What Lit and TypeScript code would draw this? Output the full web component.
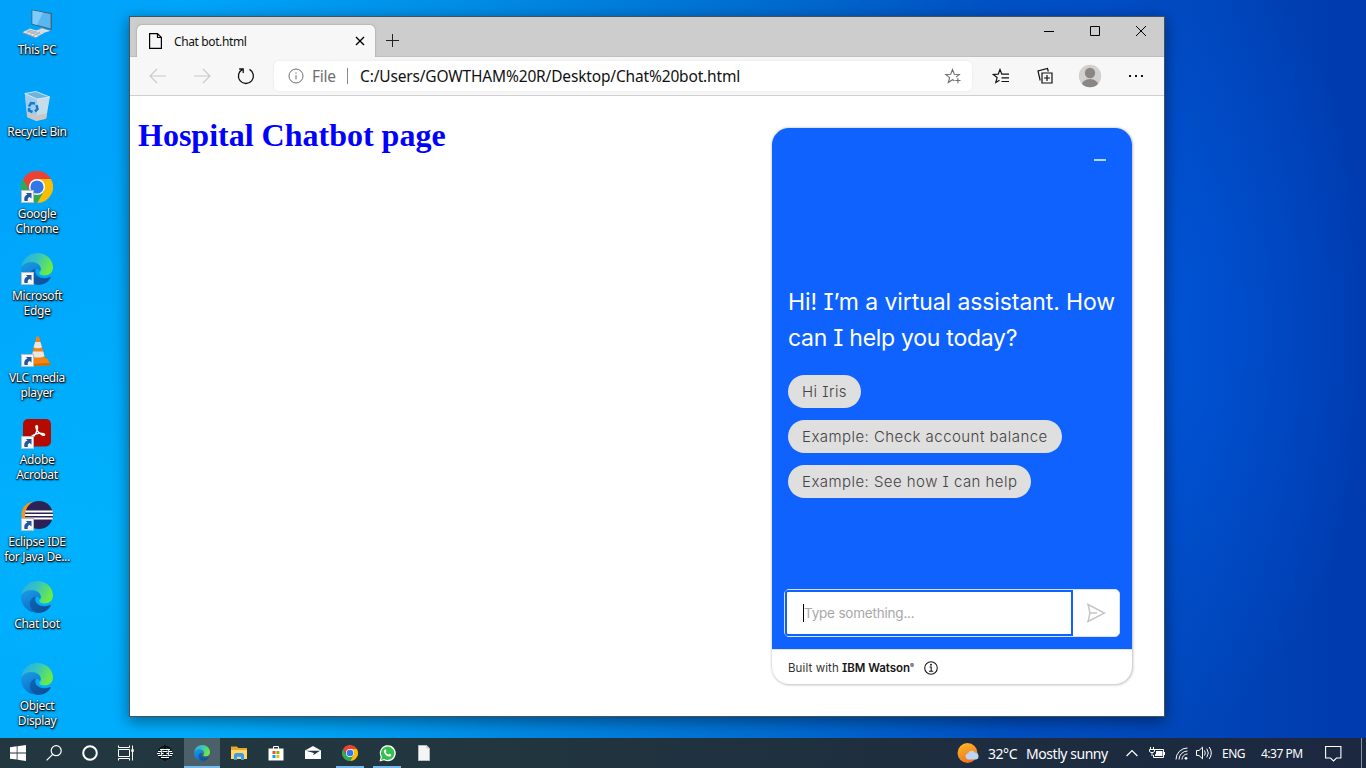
import { LitElement, html, css, svg } from "lit";
import { customElement, property } from "lit/decorators.js";

const edgeLogo = (id: string) => svg`
  <defs>
    <linearGradient id="${id}a" x1="0" y1="0" x2="1" y2=".4"><stop offset="0" stop-color="#28a8e8"/><stop offset=".5" stop-color="#35c3c4"/><stop offset="1" stop-color="#6bea45"/></linearGradient>
    <linearGradient id="${id}b" x1="0" y1="0" x2=".4" y2="1"><stop offset="0" stop-color="#1b9de2"/><stop offset="1" stop-color="#0b6fd0"/></linearGradient>
    <linearGradient id="${id}c" x1="0" y1="0" x2="1" y2="1"><stop offset="0" stop-color="#1266b4"/><stop offset="1" stop-color="#0c4c94"/></linearGradient>
  </defs>
  <path fill="url(#${id}a)" d="M.4 14C1.300 6 8 0 16.200 0 25.500 0 32 6.700 32 14.500c0 5-3.800 8-8.300 8-3.700 0-5.400-1.400-5.400-2.500 0-.9 1.400-1.600 1.400-4.200 0-3.300-3.500-6.600-8.500-6.600C6.500 9.200 2.500 11 .4 14z"/>
  <path fill="url(#${id}b)" d="M.2 14.800C1.800 11 6.200 9 11 9.200c5 .2 8.600 3 8.700 6.500 0 1.200-.3 2-.6 2.700-1-2-2.900-3-4.600-2.400C10 17 8.800 22 12 26.500c2 2.800 5 4.600 8 5.100C9.500 33.500-1 26 .2 14.800z"/>
  <path fill="url(#${id}c)" d="M15.200 15.500c-4 .6-6.700 4-6.300 8.200.5 4.800 5.200 8.700 10.600 8 4.500-.5 8-3.200 10.200-6.700.5-.8-.3-1.300-1-.9-5.500 2.600-12.500.8-14.200-4-.5-1.700-.3-3.400.7-4.600z"/>`;

const chromeLogo = svg`
  <path fill="#fbbc04" d="M29.900 8A16 16 0 0 1 16 32L22.900 20 16 8z"/>
  <path fill="#34a853" d="M16 32A16 16 0 0 1 2.100 8L9.100 20 22.900 20z"/>
  <path fill="#ea4335" d="M2.100 8A16 16 0 0 1 29.900 8H16L9.100 20z"/>
  <circle cx="16" cy="16" r="8" fill="#fff"/><circle cx="16" cy="16" r="6.600" fill="#3277ea"/>`;

const art: Record<string, unknown> = {
  pc: svg`
    <path d="M10.500 2.500 31 6v17l-20.500-5.500z" fill="#46637a"/>
    <path d="M11.500 3.600 29.600 6.900v14.600l-18.100-4.800z" fill="#58b6f2"/>
    <path d="M11.500 3.600 22 5.500 16 17.900l-4.500-1.200z" fill="#7fcbfa"/>
    <path d="M19 20.500l4 1v3l-4-1z" fill="#93a1aa"/>
    <path d="M14.500 23.500l7-2 8 2.200-7 2.300z" fill="#d5dde2"/>
    <path d="M1.500 25.200l7.500-3.700 14 4.600-8 4.400z" fill="#e2e6e8"/>
    <path d="M1.500 25.200l13.500 5.300v1L1.500 26.200z" fill="#8b979e"/>
    <path d="M5 23.700l13.800 5M7 22.700l13.800 4.700M8.600 27.700l7.200-3.800M5.300 26.400l7.200-3.800M12 29l7.200-3.900" stroke="#8a969c" stroke-width=".6"/>`,
  bin: svg`
    <path d="M3.800 4.500 28.500 8l-4 22-9.500 2-9-4z" fill="#a9d4ec" fill-opacity=".9"/>
    <path d="M3.800 4.500 16 9.500 15.500 31.500 6.500 28z" fill="#9fcdea"/>
    <path d="M16 9.500 28.800 8l-3.600 21-9.700 2.500z" fill="#c3ddea"/>
    <path d="M3.800 4.500 15 2.500 28.800 8 16 10z" fill="#6fb2da" stroke="#dff1fa" stroke-width=".8"/>
    <path d="M6 23l9.600 3.500 10.500-2.500-1 5.500-9.600 2.200-8.700-3.500z" fill="#ccc7c4"/>
    <g fill="none" stroke="#147ad2" stroke-width="2.500"><path d="M8 17.500 10 14l4 .5M15.500 16l1 4-2.500 2.500M11.500 23l-3.500-1.500.2-2.500"/></g>`,
  chrome: chromeLogo,
  edge: edgeLogo("e"),
  vlc: svg`
    <path d="M6 24.500l20.500-1 3 6.500-9 1H10z" fill="#f08a10"/><path d="M9 29l20.500-1v2.200L9 31z" fill="#d66a00"/>
    <path d="M15.500 1.500h2.400l6.600 22.500c-2 3.500-12 3.500-14.500 0z" fill="#f58212"/>
    <path d="M14.200 7h5.200l1.600 5.200c-2 1.500-6.600 1.500-8.500 0zM12 16.500h10.200l1.200 4.400c-2.500 2.200-10.200 2.200-12.600 0z" fill="#e6e6e4"/>`,
  acrobat: svg`
    <rect x="2" y="2" width="28" height="27.500" rx="5" fill="#b30b00"/>
    <path d="M10.500 20c-.7-1.300 4.500-3.400 7.500-3.700 3.400-.3 6 .5 5.600 1.600-.5 1.700-5.600-1.500-7.500-4.500-1.300-2.100-1.700-4.800-.4-4.800 1.500 0 .7 4.300-.6 7.200-1.300 2.800-3.900 5.600-4.600 4.200z" fill="none" stroke="#fff" stroke-width="1.400"/>`,
  eclipse: svg`
    <path d="M12 2.500C4 4 .5 10 .5 16S4 28 12 29.500C7 26 5 21 5 16s2-10 7-13.500z" fill="#f7941e"/>
    <ellipse cx="18" cy="16" rx="14" ry="14" fill="#2c2255"/>
    <path d="M4.300 12.500h27.400M4 16h28M4.300 19.500h27.400" stroke="#fff" stroke-width="1.900"/>`,
};

const font = css`"Noto Sans", "Open Sans", sans-serif`;

@customElement("desktop-shortcut")
class DesktopShortcut extends LitElement {
  @property() icon = "";
  @property({ type: Array }) lines: string[] = [];
  @property({ type: Boolean }) linked = false;
  static styles = css`
    :host { display: flex; flex-direction: column; align-items: center; height: 82px; padding-top: 7px; box-sizing: border-box; width: 74px; }
    svg { display: block; width: 32px; height: 32px; flex: none; }
    .label { margin-top: 3px; font: 12px/15px ${font}; letter-spacing: -0.35px; color: #fff; text-align: center; white-space: nowrap;
      text-shadow: 0 0 2px #000, 1px 1px 2px #000, 0 1px 1px rgba(0,0,0,.8); }
  `;
  render() {
    return html`
      <svg viewBox="0 0 32 32">${art[this.icon]}
        ${this.linked ? svg`<rect x="0.500" y="19.500" width="12" height="12" fill="#f6f7f8" stroke="#b9bdc2"/>
          <path d="M3.500 30c-.8-3.500.6-6 3-6.300L5 22h5.500v5.500L8.800 26C7 26.500 6.500 27.800 6.800 30z" fill="#2456a0"/>` : ""}
      </svg>
      <div class="label">${this.lines.map((l) => html`<div>${l}</div>`)}</div>`;
  }
}

@customElement("chat-widget")
class ChatWidget extends LitElement {
  static styles = css`
    :host { display: flex; flex-direction: column; width: 360px; height: 556px; border-radius: 17px; overflow: hidden; background: #fff;
      box-shadow: 0 0 3px rgba(0,0,0,.25), 1px 1px 3px rgba(0,0,0,.15); font-family: Inter, sans-serif; font-feature-settings: "cv08" 1; }
    .body { flex: 1; background: #0f62fe; display: flex; flex-direction: column; padding: 0 12px 12px; }
    .top { height: 156px; display: flex; justify-content: flex-end; }
    .min { width: 12px; height: 2px; background: #bcd3ff; margin: 31px 14px 0 0; }
    .hi { color: #fff; font-size: 23px; line-height: 36px; padding-left: 4px; white-space: nowrap; }
    .l1 { letter-spacing: -0.09px; }
    .l2 { letter-spacing: -0.27px; }
    .chips { display: flex; flex-direction: column; align-items: flex-start; gap: 12px; padding: 19px 0 0 4px; }
    .chip { height: 33px; border-radius: 17px; background: #dfdfdf; color: #444; font-size: 15px; line-height: 33px; padding: 0 14px; font-weight: 300; box-sizing: border-box; white-space: nowrap; letter-spacing: .45px; }
    .c0 { width: 73px; } .c1 { width: 274px; } .c2 { width: 243px; }
    .entry { margin-top: auto; height: 48px; box-sizing: border-box; display: flex; border: 1px solid #dce3f0; border-radius: 5px; background: #fff; }
    .field { width: 288px; box-sizing: border-box; border: 2px solid #0f62fe; border-radius: 3px 0 0 3px; display: flex; align-items: center; padding-left: 16px; font-size: 13.500px; color: #a8a8a8; letter-spacing: -.2px; }
    .caret { width: 1px; height: 18px; background: #000; }
    .send { flex: 1; display: flex; align-items: center; justify-content: center; }
    .foot { height: 35px; box-sizing: border-box; border-top: 1px solid #e0e0e0; display: flex; align-items: center; padding: 2px 16px 0; font-size: 11.500px; color: #333; white-space: nowrap; }
    .bw { width: 54px; letter-spacing: .1px; }
    .ibm { width: 82px; font-weight: 600; color: #161616; letter-spacing: -.05px; }
    sup { font-size: 6px; line-height: 0; vertical-align: 4px; }
  `;
  render() {
    const chips = ["Hi Iris", "Example: Check account balance", "Example: See how I can help"];
    return html`
      <div class="body">
        <div class="top"><div class="min"></div></div>
        <div class="hi"><div class="l1">Hi! I’m a virtual assistant. How</div><div class="l2">can I help you today?</div></div>
        <div class="chips">${chips.map((c, i) => html`<div class="chip c${i}">${c}</div>`)}</div>
        <div class="entry">
          <div class="field"><span class="caret"></span>Type something...</div>
          <div class="send"><svg width="20" height="20" viewBox="0 0 20 20" fill="none" stroke="#c6c6c6" stroke-width="1.500"><path d="M2 1.500 18.500 10 2 18.500 4 10zM4 10h7"/></svg></div>
        </div>
      </div>
      <div class="foot"><span class="bw">Built with</span><span class="ibm">IBM Watson<sup>®</sup></span>
        <svg width="14" height="14" viewBox="0 0 14 14" fill="none" stroke="#161616" stroke-width="1.100"><circle cx="7" cy="7" r="6.300"/><path d="M5.500 6h1.700v4.200M5 10.200h4.200"/><circle cx="7" cy="3.800" r=".4" fill="#161616"/></svg>
      </div>`;
  }
}

@customElement("browser-window")
class BrowserWindow extends LitElement {
  static styles = css`
    :host { display: flex; flex-direction: column; width: 1036px; height: 701px; box-sizing: border-box; border: 1px solid #44525e; background: #fff;
      box-shadow: 0 4px 14px 1px rgba(0,0,0,.4); font-family: ${font}; }
    svg { display: block; flex: none; }
    .title { height: 40px; box-sizing: border-box; background: #cdcdcd; border-bottom: 1px solid #bfbfbf; display: flex; }
    .tab { margin: 8px 0 -1px 7px; width: 238px; height: 32px; background: #f7f7f7; border-radius: 5px 5px 0 0; display: flex; align-items: center; box-shadow: 0 0 2px rgba(0,0,0,.35); clip-path: inset(-3px -3px 0 -3px); }
    .doc { margin-left: 12px; }
    .name { margin-left: 12px; width: 181px; font-size: 12px; color: #111; letter-spacing: -.38px; white-space: nowrap; }
    .plus { margin: 17px 0 0 11px; }
    .win { display: flex; margin: 8px 17px 0 auto; gap: 34px; }
    .bar { height: 39px; box-sizing: border-box; background: #f7f7f7; border-bottom: 1px solid #d0d0d0; display: flex; align-items: center; }
    .nav { display: flex; gap: 26px; padding-left: 19px; width: 125px; }
    .addr { width: 698px; height: 30px; border-radius: 5px; background: #fff; display: flex; align-items: center; font-size: 15.500px; white-space: nowrap; box-shadow: 0 0 3px rgba(0,0,0,.07); }
    .addr > svg:first-child { margin: 0 8px 0 14px; }
    .file { color: #6f6f6f; width: 35px; letter-spacing: -.3px; }
    .sep { width: 1px; height: 16px; background: #8a8a8a; margin-right: 12px; }
    .url { color: #111; letter-spacing: -.16px; flex: 1; }
    .addr > svg:last-child { margin-right: 10px; }
    .tools { display: flex; align-items: center; flex: 1; padding-left: 20px; }
    .tools > :nth-child(2) { margin-left: 26px; } .tools > :nth-child(3) { margin-left: 24px; } .tools > :nth-child(4) { margin-left: 26px; }
    .page { flex: 1; display: flex; justify-content: space-between; padding: 0 32px 0 8px; }
    h1 { margin: 21px 0 0; font: bold 32px/37px "Liberation Serif", serif; color: #00f; white-space: nowrap; }
    chat-widget { margin-top: 32px; }
  `;
  render() {
    return html`
      <div class="title">
        <div class="tab">
          <svg class="doc" width="13" height="16" viewBox="0 0 13 16" fill="none" stroke="#000" stroke-width="1.200"><path d="M.6.600H8.500L12.400 4.500V15.400H.6zM8.500.600V4.500h3.900"/></svg>
          <span class="name">Chat bot.html</span>
          <svg width="10" height="10" viewBox="0 0 10 10" stroke="#000" stroke-width="1.400"><path d="M1 1l8 8M9 1 1 9"/></svg>
        </div>
        <svg class="plus" width="13" height="13" viewBox="0 0 13 13" stroke="#222"><path d="M0 6.500h13M6.500 0v13"/></svg>
        <div class="win">
          <svg width="12" height="12" viewBox="0 0 12 12" stroke="#000"><path d="M1 6.500h10"/></svg>
          <svg width="12" height="12" viewBox="0 0 12 12" fill="none" stroke="#000"><path d="M1.500 1.500h9v9h-9z"/></svg>
          <svg width="12" height="12" viewBox="0 0 12 12" stroke="#000"><path d="M1 1l10 10M11 1 1 11"/></svg>
        </div>
      </div>
      <div class="bar">
        <div class="nav">
          <svg width="18" height="18" viewBox="0 0 18 18" fill="none" stroke="#c9c9c9" stroke-width="1.100"><path d="M17 9H1.500M8 2 1 9l7 7"/></svg>
          <svg width="18" height="18" viewBox="0 0 18 18" fill="none" stroke="#c9c9c9" stroke-width="1.100"><path d="M1 9h15.500M10 2l7 7-7 7"/></svg>
          <svg width="18" height="18" viewBox="0 0 18 18" fill="none" stroke="#111" stroke-width="1.300"><path d="M12.500 2.400A7.500 7.500 0 1 1 5.500 2.300M2.200 2h4v4"/></svg>
        </div>
        <div class="addr">
          <svg width="16" height="16" viewBox="0 0 16 16" fill="none" stroke="#6f6f6f"><circle cx="8" cy="8" r="7"/><path d="M8 7v4.500M8 4.300v1.300"/></svg>
          <span class="file">File</span><span class="sep"></span>
          <span class="url">C:/Users/GOWTHAM%20R/Desktop/Chat%20bot.html</span>
          <svg width="18" height="17" viewBox="0 0 18 17" fill="none" stroke="#6f6f6f" stroke-width="1.100"><path d="M10.500 12.800 8.500 11.700l-4.200 2.800 1.300-4.900L1.700 6.500l5-.3L8.500 1.500l1.800 4.700 5 .3-3.200 2.600M11.300 12.500h5.200M13.900 10v5.200"/></svg>
        </div>
        <div class="tools">
          <svg width="18" height="17" viewBox="0 0 18 17" fill="none" stroke="#111" stroke-width="1.200"><path d="M7.500 12.200 3.800 14.500l1.300-4.900L1.200 6.500l5-.3L8 1.500l1.800 4.700H17M9.500 9.900H17M9.500 13.500H17"/></svg>
          <svg width="18" height="18" viewBox="0 0 18 18" fill="none" stroke="#111" stroke-width="1.200"><path d="M6 6h10v10H6zM11 8v6M8 11h6M4.200 13.500 2 4l9.500-2.500.8 3"/></svg>
          <svg width="24" height="24" viewBox="0 0 24 24"><defs><clipPath id="av"><circle cx="12" cy="12" r="11.200"/></clipPath></defs><circle cx="12" cy="12" r="11.200" fill="#d3d1cf"/><circle cx="12" cy="9" r="5.200" fill="#8a8683"/><ellipse cx="12" cy="21.500" rx="8.500" ry="6.500" fill="#8a8683" clip-path="url(#av)"/></svg>
          <svg width="16" height="4" viewBox="0 0 16 4" fill="#111"><path d="M1 1h2v2H1zM7 1h2v2H7zM13 1h2v2h-2z"/></svg>
        </div>
      </div>
      <div class="page"><h1>Hospital Chatbot page</h1><chat-widget></chat-widget></div>`;
  }
}

@customElement("task-bar")
class TaskBar extends LitElement {
  static styles = css`
    :host { display: flex; height: 30px; background: linear-gradient(90deg, #22373f 0%, #21363f 35%, #1e2d3f 70%, #1b2840 100%); color: #fff; font-family: ${font}; }
    svg { display: block; }
    .cell { width: 36px; height: 30px; box-sizing: border-box; display: flex; align-items: center; justify-content: center; flex: none; border: solid transparent; border-width: 0 0 2px; padding-top: 2px; }
    .apps { display: flex; gap: 1px; padding-left: 3px; }
    .on { background: #4b6069; border-color: #76b9ed; }
    .run { background: linear-gradient(#76b9ed, #76b9ed) 50% 28px / 28px 2px no-repeat border-box; }
    .tray { margin-left: auto; display: grid; grid-template-columns: 31px 38px 99px 23px 26px 21px 26px 39px 64px 36px 5px; align-items: center; white-space: nowrap; }
    .tray > :first-child { margin-left: -1px; }
    .w { font-size: 14px; letter-spacing: -.45px; margin-left: -1px; }
    .t { font-size: 12px; letter-spacing: -.5px; }
    .peek { width: 1px; height: 30px; background: #8792a0; }
  `;
  render() {
    const apps: [string, unknown][] = [
      ["", svg`<svg width="16" height="16" viewBox="0 0 16 16"><circle cx="8" cy="8" r="6.500" fill="none" stroke="#0b1216" stroke-width="1.500"/><path d="M8 0v16" stroke="#0b1216" stroke-width="2"/><g stroke="#fff" fill="none"><path d="M3 4.500h10M1 6.500h3M5.500 6.500h5M12 6.500h3M0 8.500h3M4.500 8.500h2M9.500 8.500h2M13 8.500h3M1 10.500h3M5.500 10.500h5M12 10.500h3M4 12.500h8"/></g><path d="M4.500 5v6M11.500 5v6" stroke="#fff" stroke-width=".8"/></svg>`],
      ["on", svg`<svg width="16" height="16" viewBox="0 0 32 32">${edgeLogo("t")}</svg>`],
      ["", svg`<svg width="16" height="16" viewBox="0 0 16 16"><path fill="#e9a72c" d="M0 1.500h6l1.300 1.600H16V14H0z"/><path fill="#ffd868" d="M0 5h16v9H0z"/><path fill="#3e9be8" d="M3 9.500 4.500 8h7L13 9.500V15h-3v-3.200H6V15H3z"/></svg>`],
      ["", svg`<svg width="16" height="16" viewBox="0 0 16 16"><path d="M5.500 4V1.500h5V4" fill="none" stroke="#fff"/><path fill="#fff" d="M.500 3.500h15v12H.500z"/><path fill="#f25022" d="M4.500 6h3v3h-3z"/><path fill="#7fba00" d="M8.400 6h3v3h-3z"/><path fill="#00a4ef" d="M4.500 10h3v3h-3z"/><path fill="#ffb900" d="M8.400 10h3v3h-3z"/></svg>`],
      ["", svg`<svg width="16" height="16" viewBox="0 0 16 16"><path fill="#fff" d="M0 5.500 8 1l8 4.500V14H0z"/><path fill="#22373f" d="M1 5.800h14L10 9 8 10.200 9 8z"/></svg>`],
      ["run", svg`<svg width="16" height="16" viewBox="0 0 32 32">${chromeLogo}</svg>`],
      ["run", svg`<svg width="17" height="17" viewBox="0 0 17 17"><path fill="#fff" d="M.500 16.500 1.700 12A8 8 0 1 1 5 15.300z"/><path fill="#35c14e" d="M2 15.100 3 11.900A6.700 6.700 0 1 1 5.300 14.100z"/><path fill="#fff" d="M5.700 4.500c.6-.5 1-.2 1.200.3l.5 1.300c.1.400-.5.900-.6 1.100.6 1.300 1.500 2 2.700 2.500.4-.3.700-1 1.100-.9l1.500.8c.3.300.1 1.200-.5 1.600-1.500 1-3.700-.2-5-1.500-1.500-1.500-2.600-3.500-.9-5.200z"/></svg>`],
      ["", svg`<svg width="12" height="16" viewBox="0 0 12 16"><path fill="#f5f5f5" stroke="#b9b9b9" stroke-width=".6" d="M.3.300H8.500L11.700 3.500V15.700H.3z"/><path fill="#c9c9c9" d="M8.500.300 11.700 3.500H8.500z"/></svg>`],
    ];
    return html`
      <div class="cell"><svg width="16" height="16" viewBox="0 0 16 16" fill="#fff"><path d="M0 2.300 6.700 1.300V7.500H0zM7.500 1.200 16 0v7.500H7.500zM0 8.400h6.700v6.200L0 13.700zM7.500 8.400H16V16l-8.500-1.300z"/></svg></div>
      <div class="cell"><svg width="16" height="16" viewBox="0 0 16 16" fill="none" stroke="#fff" stroke-width="1.200"><circle cx="10.200" cy="5.700" r="5"/><path d="M6.700 9.300.6 15.400"/></svg></div>
      <div class="cell"><svg width="16" height="16" viewBox="0 0 16 16" fill="none" stroke="#fff" stroke-width="2"><circle cx="8" cy="8" r="6.800"/></svg></div>
      <div class="cell"><svg width="18" height="16" viewBox="0 0 18 16" fill="none" stroke="#fff"><path d="M1.500.500v2h11v-2M1.500 15.500v-2h11v2M1.500 4.500h11v7h-11zM15.500.500v15"/><path d="M14.300 4.300h2.500v2.500h-2.500z" fill="#fff" stroke="none"/></svg></div>
      <div class="apps">${apps.map(([c, i]) => html`<div class="cell ${c}">${i}</div>`)}</div>
      <div class="tray">
        <svg width="23" height="22" viewBox="0 0 23 22"><defs><linearGradient id="sun" x1="0" y1="0" x2=".4" y2="1"><stop offset="0" stop-color="#fbc02a"/><stop offset="1" stop-color="#f2741c"/></linearGradient></defs><circle cx="10.500" cy="11" r="10" fill="url(#sun)"/><path d="M11.500 17.500a3.200 3.200 0 0 1-.5-6.300 4 4 0 0 1 7.200-.5 3.500 3.500 0 0 1 1 6.800z" fill="#bcd4fa"/></svg>
        <span class="w">32°C</span><span class="w">Mostly sunny</span>
        <svg width="12" height="8" viewBox="0 0 12 8" fill="none" stroke="#fff" stroke-width="1.200"><path d="M.600 7 6 1.500 11.400 7"/></svg>
        <svg width="17" height="12" viewBox="0 0 17 12" fill="none" stroke="#fff"><path d="M5.500 2.500h9v8h-10V8M15.500 5v3" /><path d="M7 4h6.500v5H6V7.500l1-1z" fill="#fff" stroke="none"/><path d="M1.500 0v2M4.500 0v2M.5 2.500h5v2l-1.500 1h-2l-1.500-1zM3 5.500V9"/></svg>
        <svg width="13" height="13" viewBox="0 0 13 13" fill="none" stroke="#fff"><path d="M1 12.500A11.500 11.500 0 0 1 12.500 1M4 12.500A8.500 8.500 0 0 1 12.500 4M7 12.500A5.500 5.500 0 0 1 12.500 7"/><circle cx="11" cy="11.300" r="1.400" fill="#fff" stroke="none"/></svg>
        <svg width="17" height="14" viewBox="0 0 17 14" fill="none" stroke="#fff"><path d="M.500 4.500h2.500l3.500-3.300v11.600L3 9.500H.500zM8.500 4.500q1.600 2.500 0 5M10.800 2.700q3 4.300 0 8.600M13.200 1q4.200 6 0 12"/></svg>
        <span class="t">ENG</span><span class="t">4:37 PM</span>
        <svg width="17" height="17" viewBox="0 0 17 17" fill="none" stroke="#fff" stroke-width="1.100"><path d="M.600 1.500h15.300v11.500H11.500L8.500 15.900 5.500 13H.600z"/></svg>
        <span class="peek"></span>
      </div>`;
  }
}

@customElement("app-root")
class AppRoot extends LitElement {
  static styles = css`
    :host { display: flex; flex-direction: column; width: 1366px; height: 768px; overflow: hidden;
      background: radial-gradient(ellipse 260px 420px at 1120px 330px, rgba(0,92,232,.75), rgba(0,80,220,0)),
        radial-gradient(ellipse 500px 420px at 60px 560px, rgba(0,184,255,.7), rgba(0,180,255,0)),
        linear-gradient(90deg, #00a2fa 0, #00a6fb 180px, #008fe8 450px, #006fd2 750px, #0050c2 1000px, #0045b8 1200px, #003aae 1366px); }
    .desk { flex: 1; display: flex; min-height: 0; }
    .icons { width: 130px; box-sizing: border-box; flex: none; }
    browser-window { margin: 16px 0 0 -1px; flex: none; }
  `;
  render() {
    const items: [string, string[], boolean][] = [
      ["pc", ["This PC"], false],
      ["bin", ["Recycle Bin"], false],
      ["chrome", ["Google", "Chrome"], true],
      ["edge", ["Microsoft", "Edge"], true],
      ["vlc", ["VLC media", "player"], true],
      ["acrobat", ["Adobe", "Acrobat"], true],
      ["eclipse", ["Eclipse IDE", "for Java De..."], true],
      ["edge", ["Chat bot"], false],
      ["edge", ["Object", "Display"], false],
    ];
    return html`
      <div class="desk">
        <div class="icons">${items.map(([i, l, s]) => html`<desktop-shortcut .icon=${i} .lines=${l} .linked=${s}></desktop-shortcut>`)}</div>
        <browser-window></browser-window>
      </div>
      <task-bar></task-bar>`;
  }
}
